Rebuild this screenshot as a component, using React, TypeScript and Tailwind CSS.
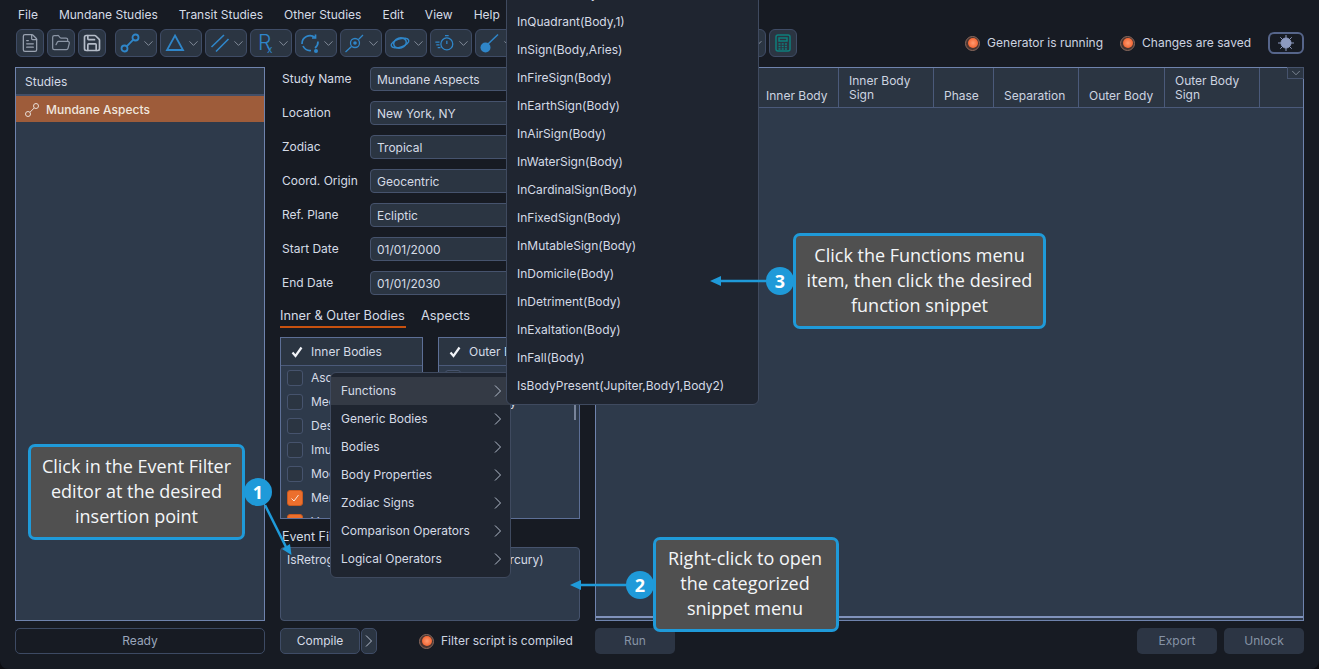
import React from 'react';
import { ChevronDown, FileText, FolderOpen, Save } from 'lucide-react';

const menus = ['File', 'Mundane Studies', 'Transit Studies', 'Other Studies', 'Edit', 'View', 'Help'];

const blue = '#2f86c9';

const toolIcons: React.ReactNode[] = [
  <svg key="a" width="22" height="22" viewBox="0 0 22 22" fill="none" stroke={blue} strokeWidth="1.8">
    <circle cx="5.5" cy="16.5" r="3" />
    <circle cx="16.5" cy="5.5" r="3" />
    <path d="M7.7 14.3 14.3 7.7" />
  </svg>,
  <svg key="b" width="22" height="22" viewBox="0 0 22 22" fill="none" stroke={blue} strokeWidth="1.8">
    <path d="M11 3.5 19 18H3z" />
  </svg>,
  <svg key="c" width="22" height="22" viewBox="0 0 22 22" fill="none" stroke={blue} strokeWidth="1.6">
    <path d="M2.5 15 15 3M7 19.5 19.5 7" />
  </svg>,
  <svg key="d" width="22" height="22" viewBox="0 0 22 22" fill={blue}>
    <text x="4" y="18" fontSize="21" fontFamily="Inter, sans-serif" fontWeight="300">R</text>
    <text x="13" y="21" fontSize="10" fontFamily="Inter, sans-serif">x</text>
  </svg>,
  <svg key="e" width="22" height="22" viewBox="0 0 22 22" fill="none" stroke={blue} strokeWidth="1.7">
    <path d="M3 12a8 8 0 0 1 13-6.5M19 9.5a8 8 0 0 1-3 6.5M12 18.5A8 8 0 0 1 4 14" />
    <path d="M16.5 2.5v3.5H13" />
    <circle cx="17" cy="19" r="2" fill={blue} stroke="none" />
  </svg>,
  <svg key="f" width="22" height="22" viewBox="0 0 22 22" fill="none" stroke={blue} strokeWidth="1.3">
    <circle cx="11" cy="11" r="4.5" />
    <circle cx="11" cy="11" r="1.8" fill={blue} stroke="none" />
    <path d="M1.5 20 7.5 14.5M14.5 7.5 19 3" />
  </svg>,
  <svg key="g" width="24" height="22" viewBox="0 0 24 22" fill="none" stroke={blue} strokeWidth="1.6">
    <ellipse cx="12" cy="11" rx="10" ry="4.5" transform="rotate(-18 12 11)" />
    <ellipse cx="12" cy="11" rx="7" ry="5.5" transform="rotate(-18 12 11)" />
  </svg>,
  <svg key="h" width="24" height="22" viewBox="0 0 24 22" fill="none" stroke={blue} strokeWidth="1.4">
    <circle cx="14" cy="12" r="6.5" />
    <path d="M14 8.5V12M12 3h4M1.5 10H6M2.5 13H6M4 16h3" />
  </svg>,
  <svg key="i" width="22" height="22" viewBox="0 0 22 22" fill="none" stroke={blue} strokeWidth="1.5">
    <circle cx="6.5" cy="15.5" r="5" fill={blue} stroke="none" />
    <path d="M9 12 19 2.5" />
  </svg>,
];

const functions = [
  'InHouse(Body,1)',
  'InQuadrant(Body,1)',
  'InSign(Body,Aries)',
  'InFireSign(Body)',
  'InEarthSign(Body)',
  'InAirSign(Body)',
  'InWaterSign(Body)',
  'InCardinalSign(Body)',
  'InFixedSign(Body)',
  'InMutableSign(Body)',
  'InDomicile(Body)',
  'InDetriment(Body)',
  'InExaltation(Body)',
  'InFall(Body)',
  'IsBodyPresent(Jupiter,Body1,Body2)',
];

const categories = [
  'Functions',
  'Generic Bodies',
  'Bodies',
  'Body Properties',
  'Zodiac Signs',
  'Comparison Operators',
  'Logical Operators',
];

const fields = [
  ['Study Name', 'Mundane Aspects'],
  ['Location', 'New York, NY'],
  ['Zodiac', 'Tropical'],
  ['Coord. Origin', 'Geocentric'],
  ['Ref. Plane', 'Ecliptic'],
  ['Start Date', '01/01/2000'],
  ['End Date', '01/01/2030'],
];

const innerBodies: Array<[string, boolean]> = [
  ['Ascendant', false],
  ['Medium Coeli', false],
  ['Descendant', false],
  ['Imum Coeli', false],
  ['Moon', false],
  ['Mercury', true],
  ['Venus', true],
];

const outerBodies: Array<[string, boolean]> = [
  ['Moon', false],
  ['Mercury', false],
  ['Venus', false],
  ['Mars', false],
  ['Ceres', false],
  ['Pluto', false],
];

const columns: Array<[string, string, string]> = [
  ['Date', 'w-[80px]', 'pb-[4px]'],
  ['Time', 'w-[80px]', 'pb-[4px]'],
  ['Inner Body', 'w-[83px]', 'pb-[4px]'],
  ['Inner Body Sign', 'w-[95px]', 'pb-[5px]'],
  ['Phase', 'w-[60px]', 'pb-[4px]'],
  ['Separation', 'w-[85px]', 'pb-[4px]'],
  ['Outer Body', 'w-[86px]', 'pb-[4px]'],
  ['Outer Body Sign', 'w-[95px]', 'pb-[5px]'],
];

function Led() {
  return (
    <span className="w-[15px] h-[15px] rounded-full bg-[#4a3430] border border-[#8a6a5e] flex items-center justify-center shrink-0">
      <span className="w-[10px] h-[10px] rounded-full bg-[radial-gradient(circle,#ff9a70_0%,#f2602c_80%)]" />
    </span>
  );
}

function ToolDropdown({ children, className = '' }: { children?: React.ReactNode; className?: string }) {
  return (
    <div className={`w-[42px] h-[28px] bg-[#2b3542] border border-[#3f4c66] rounded-[6px] flex items-center justify-between pl-[3px] shrink-0 ${className}`}>
      <span className="w-[22px] flex justify-center">{children}</span>
      <ChevronDown size={17} strokeWidth={1} color="#b4bdcc" />
    </div>
  );
}

function FileButton({ children }: { children: React.ReactNode }) {
  return (
    <div className="w-[28px] h-[28px] bg-[#2b3542] border border-[#3f4c66] rounded-[6px] flex items-center justify-center shrink-0">
      {children}
    </div>
  );
}

function Arrow() {
  return (
    <svg width="8" height="14" viewBox="0 0 8 14" fill="none" stroke="#b4bdcc" strokeWidth="1">
      <path d="M1 1.5 6.5 7 1 12.5" />
    </svg>
  );
}

function BodyPanel({ title, items, width, scroll }: { title: string; items: Array<[string, boolean]>; width: string; scroll?: boolean }) {
  return (
    <div className={`relative ${width} h-[182px] border border-[#5d6f96] bg-[#2e3a4b] overflow-hidden`}>
      <div className="h-[28px] bg-[#2b3542] border-b border-[#4b5a7a] flex items-center pl-[10px] gap-[8px] text-[#d5dbe6]">
        <svg width="12" height="12" viewBox="0 0 12 12" fill="none" stroke="#f2f4f8" strokeWidth="2.2">
          <path d="M1.5 6.5 4.5 10 10.5 1.5" />
        </svg>
        <span>{title}</span>
      </div>
      <div className="flex flex-col pl-[6px]">
        {items.map(([name, checked]) => (
          <div key={name} className="h-[24px] flex items-center gap-[8px] text-[#d5dbe6] shrink-0">
            {checked ? (
              <span className="w-[16px] h-[16px] rounded-[3px] bg-[#ec6f2d] border border-[#c85a20] flex items-center justify-center">
                <svg width="10" height="10" viewBox="0 0 10 10" fill="none" stroke="#f7e6da" strokeWidth="1">
                  <path d="M1.5 5.5 4 8 8.5 2" />
                </svg>
              </span>
            ) : (
              <span className="w-[16px] h-[16px] rounded-[3px] bg-[#2b3542] border border-[#46536d]" />
            )}
            <span>{name}</span>
          </div>
        ))}
      </div>
      {scroll && <div className="absolute right-[3px] top-[40px] w-[2px] h-[42px] bg-[#78849a]" />}
    </div>
  );
}

function Callout({ className, lines }: { className: string; lines: string[] }) {
  return (
    <div className={`absolute bg-[#505050] border-[3px] border-[#1f9ad9] rounded-[7px] flex flex-col items-center justify-center pb-[2px] text-[#f4f6f8] text-[18px] leading-[25px] font-['Open_Sans',sans-serif] ${className}`}>
      {lines.map((line) => (
        <span key={line} className="whitespace-nowrap">{line}</span>
      ))}
    </div>
  );
}

function Badge({ className, n }: { className: string; n: number }) {
  return (
    <div className={`absolute w-[28px] h-[28px] rounded-full bg-[#1f9ad9] text-white font-bold text-[18px] flex items-center justify-center font-['Open_Sans',sans-serif] ${className}`}>
      {n}
    </div>
  );
}

export default function App() {
  return (
    <div className="relative w-[1319px] h-[669px] overflow-hidden bg-[#0d0e12] font-['Inter',sans-serif] text-[12px]">
      <div className="w-full h-full bg-[#171b23] rounded-b-[8px] flex flex-col">
        {/* Menu bar */}
        <div className="h-[29px] flex items-center pl-[18px] gap-[21px] text-[#d5dbe6] text-[12px] shrink-0">
          {menus.map((m) => (
            <span key={m}>{m}</span>
          ))}
        </div>

        {/* Toolbar */}
        <div className="h-[28px] flex items-center pl-[16px] pr-[15px] shrink-0">
          <div className="flex gap-[3px]">
            <FileButton><FileText size={20} strokeWidth={1.5} color="#9aa3b1" /></FileButton>
            <FileButton><FolderOpen size={20} strokeWidth={1.5} color="#8b95a5" /></FileButton>
            <FileButton><Save size={20} strokeWidth={2} color="#b4bcc8" /></FileButton>
          </div>
          <div className="flex gap-[3px] ml-[9px]">
            {toolIcons.map((icon, i) => (
              <ToolDropdown key={i}>{icon}</ToolDropdown>
            ))}
            <ToolDropdown />
            <ToolDropdown />
            <ToolDropdown />
            <ToolDropdown />
            <ToolDropdown className="ml-[24px]" />
            <FileButton>
              <svg width="18" height="20" viewBox="0 0 18 20" fill="none" stroke="#0e7f7c" strokeWidth="1.5">
                <rect x="2" y="2" width="14" height="16" rx="2" />
                <rect x="5" y="5" width="8" height="3" />
                <path d="M4.5 11h9M4.5 13.5h9M4.5 16h9" strokeDasharray="2 1.2" />
              </svg>
            </FileButton>
          </div>
          <div className="ml-auto flex items-center text-[#cdd4e0]">
            <Led />
            <span className="ml-[7px]">Generator is running</span>
            <span className="ml-[17px]"><Led /></span>
            <span className="ml-[7px]">Changes are saved</span>
            <div className="ml-[17px] w-[36px] h-[22px] border-2 border-[#56658a] rounded-[6px] flex items-center justify-center">
              <svg width="16" height="16" viewBox="0 0 16 16" stroke="#8d9ac0" strokeWidth="1">
                <circle cx="8" cy="8" r="5" fill="#8d9ac0" />
                <path d="M8 0v16M0 8h16M2.3 2.3l11.4 11.4M13.7 2.3 2.3 13.7" />
              </svg>
            </div>
          </div>
        </div>

        {/* Main columns */}
        <div className="h-[554px] mt-[10px] flex gap-[15px] px-[15px] shrink-0">
          <div className="w-[250px] border border-[#6f83ad] bg-[#2e3a4b] flex flex-col">
            <div className="h-[26px] bg-[#2b3542] flex items-center pl-[9px] pt-[2px] text-[#d5dbe6]">Studies</div>
            <div className="h-[2px] bg-[#434f68]" />
            <div className="h-[26px] bg-[#9e5c3a] flex items-center pl-[8px] pt-[2px] gap-[6px] text-[#f0e6de] font-medium">
              <svg width="16" height="16" viewBox="0 0 16 16" fill="none" stroke="#e8ddd6" strokeWidth="1">
                <circle cx="4" cy="12" r="2.5" />
                <circle cx="12" cy="4" r="2.5" />
                <path d="M6 10.2 10.2 6" />
              </svg>
              <span>Mundane Aspects</span>
            </div>
          </div>

          <div className="w-[300px] flex flex-col">
            <div className="flex flex-col gap-[10px]">
              {fields.map(([label, value]) => (
                <div key={label} className="h-[24px] flex items-center text-[#d5dbe6]">
                  <span className="w-[90px] pl-[2px]">{label}</span>
                  <div className="w-[210px] h-[24px] bg-[#2b3542] border border-[#46536d] rounded-[4px] flex items-center pl-[6px] pt-[2px]">
                    {value}
                  </div>
                </div>
              ))}
            </div>
            <div className="flex mt-[10px] h-[23px] pt-[1px] gap-[15px] text-[#d5dbe6] text-[12.8px]">
              <div className="w-[126px] border-b-2 border-[#c8510f] whitespace-nowrap">Inner &amp; Outer Bodies</div>
              <div>Aspects</div>
            </div>
            <div className="flex justify-between mt-[9px]">
              <BodyPanel title="Inner Bodies" items={innerBodies} width="w-[143px]" />
              <BodyPanel title="Outer Bodies" items={outerBodies} width="w-[142px]" scroll />
            </div>
            <div className="h-[28px] flex items-end pl-[2px] text-[#d5dbe6] text-[12.5px]">Event Filter</div>
            <div className="flex-1 bg-[#2e3a4b] border border-[#46536d] rounded-[4px] pl-[6px] pt-[3px] text-[#d5dbe6] text-[12px]">
              IsRetrograde(Mercury) Or InAirSign(Mercury)
            </div>
          </div>

          <div className="relative w-[709px] border border-[#6f83ad] bg-[#2e3a4b] flex flex-col">
            <div className="h-[40px] bg-[#2b3542] border-b border-[#4b5a7a] flex shrink-0 text-[#cdd4e0]">
              {columns.map(([name, width, pad]) => (
                <div key={name} className={`${width} ${pad} shrink-0 border-r border-[#4b5a7a] flex items-end pl-[10px] pr-[2px] leading-[14px]`}>
                  {name}
                </div>
              ))}
            </div>
            <div className="flex-1" />
            <div className="h-[2px] bg-[#8092bb]" />
            <div className="h-[2px]" />
            <div className="absolute top-[-1px] right-[-1px] w-[17px] h-[12px] bg-[#2b3542] border border-[#46536d] flex items-center justify-center">
              <ChevronDown size={14} strokeWidth={1} color="#b4bdcc" />
            </div>
          </div>
        </div>

        {/* Footer */}
        <div className="h-[26px] mt-[7px] flex gap-[15px] px-[15px] shrink-0">
          <div className="w-[250px] bg-[#171b23] border border-[#3d4a63] rounded-[5px] flex items-center justify-center text-[#9aa6bb]">
            Ready
          </div>
          <div className="w-[300px] flex items-center text-[#d5dbe6]">
            <div className="w-[80px] h-[26px] bg-[#2b3542] border border-[#3f4c66] rounded-[5px] flex items-center justify-center">Compile</div>
            <div className="w-[16px] h-[26px] ml-[1px] bg-[#2b3542] border border-[#3f4c66] rounded-[5px] flex items-center justify-center">
              <Arrow />
            </div>
            <span className="ml-[42px]"><Led /></span>
            <span className="ml-[7px] text-[#cdd4e0]">Filter script is compiled</span>
          </div>
          <div className="w-[709px] flex text-[#8693a6]">
            <div className="w-[80px] bg-[#2c3544] rounded-[5px] flex items-center justify-center">Run</div>
            <div className="w-[80px] ml-auto bg-[#2c3544] rounded-[5px] flex items-center justify-center">Export</div>
            <div className="w-[80px] ml-[7px] bg-[#2c3544] rounded-[5px] flex items-center justify-center">Unlock</div>
          </div>
        </div>
      </div>

      {/* Context menu */}
      <div className="absolute left-[330px] top-[372px] w-[181px] bg-[#1f2530] border border-[#3f4a5f] rounded-[6px] py-[4px] text-[#d5dbe6]">
        {categories.map((c, i) => (
          <div key={c} className={`h-[28px] flex items-center justify-between pl-[10px] pr-[8px] ${i === 0 ? 'bg-[#343a45]' : ''}`}>
            <span>{c}</span>
            <Arrow />
          </div>
        ))}
      </div>

      {/* Functions submenu */}
      <div className="absolute left-[506px] top-[-25px] w-[253px] bg-[#1f2530] border border-[#3f4a5f] rounded-[6px] pt-[4px] pb-[4px] text-[#d5dbe6]">
        {functions.map((f) => (
          <div key={f} className="h-[28px] flex items-center pl-[10px]">{f}</div>
        ))}
      </div>

      {/* Arrows of the callouts */}
      <svg className="absolute left-0 top-0 pointer-events-none" width="1319" height="669" viewBox="0 0 1319 669" fill="#1f9ad9" stroke="none">
        <path d="M265 505 286 547" stroke="#1f9ad9" strokeWidth="2.5" fill="none" />
        <path d="M291.5 555 282 549 290 544z" />
        <path d="M578 585H627" stroke="#1f9ad9" strokeWidth="2.5" fill="none" />
        <path d="M570 585 581 580V590z" />
        <path d="M718 281H767" stroke="#1f9ad9" strokeWidth="2.5" fill="none" />
        <path d="M710 281 721 276V286z" />
      </svg>

      <Callout className="left-[28px] top-[444px] w-[217px] h-[96px]" lines={['Click in the Event Filter', 'editor at the desired', 'insertion point']} />
      <Badge className="left-[244px] top-[478px]" n={1} />
      <Callout className="left-[653px] top-[537px] w-[186px] h-[95px] pr-[2px]" lines={['Right-click to open', 'the categorized', 'snippet menu']} />
      <Badge className="left-[626px] top-[571px]" n={2} />
      <Callout className="left-[793px] top-[233px] w-[253px] h-[96px]" lines={['Click the Functions menu', 'item, then click the desired', 'function snippet']} />
      <Badge className="left-[766px] top-[267px]" n={3} />
    </div>
  );
}
